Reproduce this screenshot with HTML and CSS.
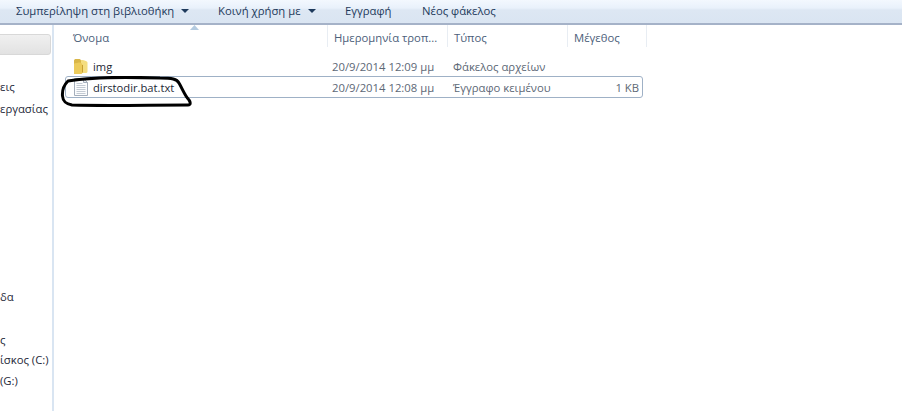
FILE: index.html
```html
<!DOCTYPE html>
<html lang="el">
<head>
<meta charset="utf-8">
<title>Explorer</title>
<link rel="stylesheet" href="styles.css">
</head>
<body>
<div class="window">
  <header class="toolbar">
    <span class="tool tool-lib">Συμπερίληψη στη βιβλιοθήκη<i class="caret"></i></span>
    <span class="tool tool-share">Κοινή χρήση με<i class="caret"></i></span>
    <span class="tool tool-burn">Εγγραφή</span>
    <span class="tool">Νέος φάκελος</span>
  </header>
  <div class="body">
    <aside class="sidebar">
      <div class="selected-nav"></div>
      <div class="nav nav-1">εις</div>
      <div class="nav nav-2">εργασίας</div>
      <div class="nav nav-3">δα</div>
      <div class="nav nav-4">ς</div>
      <div class="nav nav-5">ίσκος (C:)</div>
      <div class="nav nav-6">(G:)</div>
    </aside>
    <main class="content">
      <div class="columns">
        <div class="col col-name">Όνομα<svg class="sort" width="9" height="5" viewBox="0 0 9 5"><path d="M0 5 4.500 0 9 5Z" fill="#b4cbe0"/></svg></div>
        <div class="col col-date">Ημερομηνία τροπ...</div>
        <div class="col col-type">Τύπος</div>
        <div class="col col-size">Μέγεθος</div>
      </div>
      <div class="row row-folder">
        <div class="cell cell-name">
          <svg class="icon" width="17" height="17" viewBox="0 0 17 17">
            <path d="M1 2.500C1 1.500 2 1 3 1h3.500c1 0 1.500 1 1.500 2v10l-7 3Z" fill="#d9b648"/>
            <path d="M8 2c2 0 4 .5 5 1 1 .5 1.500 1 1.500 2v8.500c0 1-1 1.500-2 1.500H4.500C3 15 1 15.500 1 14V6c2-.5 4 0 5 1 1 0 2 .5 2 1Z" fill="#f4dd80"/>
            <path d="M6.500 4.500c2 0 3 1.500 3 2.500v7.500c0 1-1 1.500-2 1.500H3c-1.500 0-2-.5-2-1.500V6c2-1 4.500-1.500 5.500-1.500Z" fill="#eccb5b"/>
            <path d="M9.500 7v7.500" stroke="#c79f32" fill="none"/>
          </svg>
          <span class="fname">img</span>
        </div>
        <div class="cell cell-date">20/9/2014 12:09 μμ</div>
        <div class="cell cell-type">Φάκελος αρχείων</div>
        <div class="cell cell-size"></div>
      </div>
      <div class="row row-file">
        <div class="cell cell-name">
          <svg class="icon" width="16" height="18" viewBox="0 0 16 18">
            <path d="M1.500.5h9l4 4v13h-13Z" fill="#fbfcfd" stroke="#a4aebb"/>
            <path d="M10.500.5v4h4Z" fill="#e6ebf0" stroke="#a4aebb"/>
            <path d="M3.500 5.500h6M3.500 7.500h9M3.500 9.500h9M3.500 11.500h9M3.500 13.500h9M3.500 15.500h9" stroke="#c3cad3"/>
          </svg>
          <span class="fname">dirstodir.bat.txt</span>
        </div>
        <div class="cell cell-date">20/9/2014 12:08 μμ</div>
        <div class="cell cell-type">Έγγραφο κειμένου</div>
        <div class="cell cell-size">1 KB</div>
      </div>
      <svg class="scribble" width="134" height="36" viewBox="0 0 134 36">
        <path d="M8 5C4 9 2 14 2.500 20 3 26 6 28 12 29 45 30 90 29 128 29 131 29 130.500 26 129 24 125 20 123 14 119 7 117 3 112 2 100 2 70 1 30 1 8 5Z" fill="none" stroke="#000" stroke-width="3" stroke-linecap="round" stroke-linejoin="round"/>
      </svg>
    </main>
  </div>
</div>
</body>
</html>
```
FILE: styles.css
```css
* { box-sizing: border-box; }
html, body { margin: 0; padding: 0; }
body {
  width: 902px;
  height: 411px;
  overflow: hidden;
  background: #fff;
  font-family: "Open Sans", "Noto Sans", sans-serif;
  font-size: 11.3px;
  color: #1e3a5c;
}
.window { display: flex; flex-direction: column; height: 411px; }
.toolbar {
  flex: none;
  height: 25px;
  display: flex;
  align-items: center;
  padding: 0 0 3px 16px;
  background: linear-gradient(#f3f8fe 0, #e9f1fb 8px, #dde7f3 10px, #dae5f2 22px, #dce6f3 23px);
  border-bottom: 2px solid #a5b2c8;
  color: #1e3a5c;
  white-space: nowrap;
}
.tool { display: inline-flex; align-items: center; }
.tool-lib { width: 202px; }
.tool-share { width: 127px; }
.tool-burn { width: 77px; }
.caret {
  margin-left: 7px;
  margin-top: 1px;
  border-left: 4px solid transparent;
  border-right: 4px solid transparent;
  border-top: 4px solid #1e3a5c;
}
.body { flex: 1; display: flex; min-height: 0; }
.sidebar {
  flex: none;
  width: 54px;
  position: relative;
  background: #fff;
  border-right: 2px solid #d9e5f2;
  color: #1f2a3a;
  overflow: hidden;
  padding-top: 9px;
}
.selected-nav {
  height: 21px;
  margin-left: -4px;
  margin-right: 1px;
  background: linear-gradient(#f0f0f0, #e2e2e2);
  border: 1px solid #d8d8d8;
  border-radius: 3px;
}
.nav {
  height: 21px;
  line-height: 21px;
  white-space: nowrap;
  color: #1f2a3a;
}
.nav-1 { margin-top: 21px; }
.nav-2 { margin-top: 1px; }
.nav-3 { margin-top: 167px; }
.nav-4 { margin-top: 22px; }
.nav-5 { margin-top: -1px; }
.nav-6 { margin-top: 0; }
.content {
  flex: 1;
  position: relative;
  min-width: 0;
}
.columns {
  display: flex;
  height: 22px;
  margin-left: 18px;
  color: #4c607a;
}
.col {
  height: 22px;
  padding: 3px 0 0 6px;
  line-height: 20px;
  position: relative;
  border-right: 1px solid #e8edf3;
}
.col-name { width: 256px; padding-left: 1px; }
.col-date { width: 120px; }
.col-type { width: 120px; }
.col-size { width: 79px; }
.sort { position: absolute; left: 118px; top: 0; }
.row {
  display: flex;
  align-items: center;
  height: 22px;
  margin-left: 11px;
  width: 578px;
  border: 1px solid transparent;
  color: #5d6876;
}
.row-folder { margin-top: 8px; margin-bottom: -1px; }
.row-file {
  border-color: #9fb1c6;
  border-radius: 3px;
}
.cell { white-space: nowrap; }
.cell-name { width: 266px; display: flex; align-items: center; gap: 4px; padding-left: 7px; }
.row-folder .cell-name { gap: 3px; }
.fname { color: #1c2835; font-size: 11.2px; }
.icon { flex: none; }
.cell-date { width: 121px; }
.cell-type { width: 120px; }
.cell-size { flex: 1; text-align: right; padding-right: 3px; }
.scribble { position: absolute; left: 6px; top: 51px; }
```
